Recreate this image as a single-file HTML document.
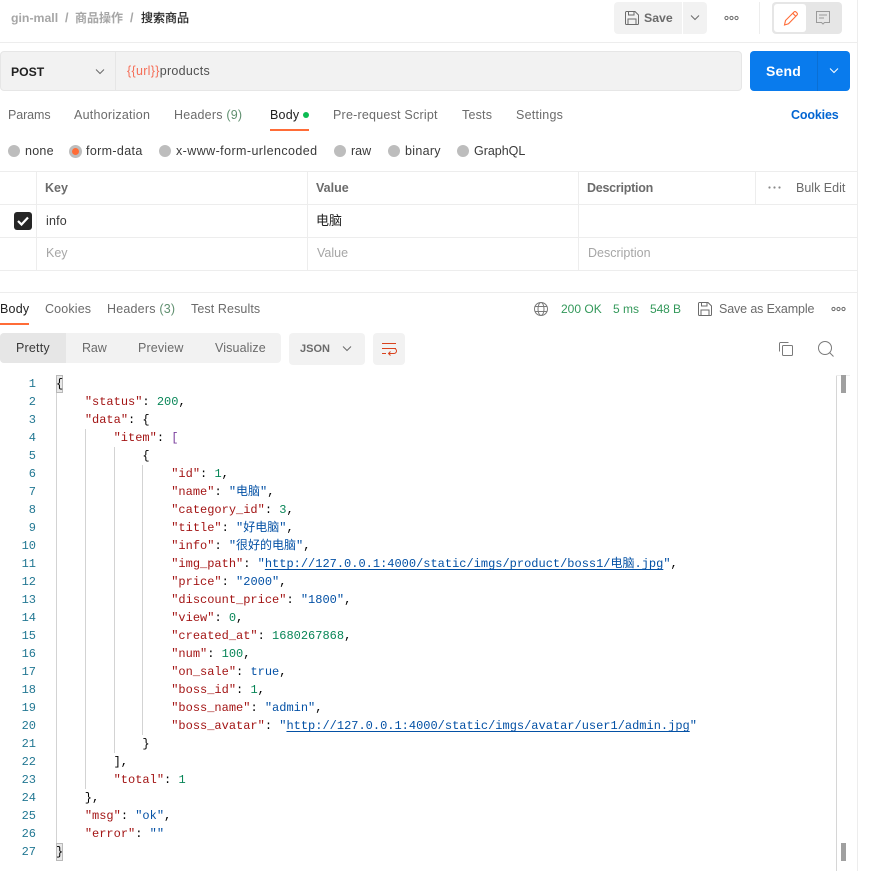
<!DOCTYPE html>
<html lang="zh"><head><meta charset="utf-8"><title>gin-mall</title>
<style>
html,body{margin:0;padding:0;background:#fff}
body{width:874px;height:871px;position:relative;overflow:hidden;font-family:"Liberation Sans","Noto Sans CJK SC",sans-serif;font-size:12.5px;color:#6b6b6b}
.b{position:absolute}
.t{position:absolute;white-space:pre;line-height:20px;height:20px}
.d{color:#212121}.m{color:#6b6b6b}.p{color:#a6a6a6}.g{color:#007f31;opacity:.8;font-size:12px}
.s{font-weight:bold}
.r{position:absolute;top:145px;width:12px;height:12px;border-radius:50%;background:#bdbdbd}
.l{color:#3a3a3a;top:141px}
svg{position:absolute;overflow:visible;fill:none}
.c{position:absolute;left:56px;height:18px;white-space:pre;font:12px/18px "Liberation Mono","Noto Sans CJK SC",monospace;color:#000}
.n{position:absolute;left:0;width:36px;text-align:right;font:12px/18px "Liberation Mono",monospace;color:#237893}
.k{color:#a31515}.v{color:#0451a5}.u{color:#0451a5;text-decoration:underline;text-underline-offset:2px}.i{color:#098658}.o{color:#0451a5}
</style></head><body>

<!-- structural lines -->
<div class="b" style="left:857px;top:0;width:1px;height:871px;background:#ededed"></div>
<div class="b" style="left:0;top:42px;width:857px;height:1px;background:#ededed"></div>

<!-- breadcrumb -->
<span class="t s p" style="left:11px;top:8px;font-size:12.3px">gin-mall</span>
<span class="t s p" style="left:65px;top:8px">/</span>
<span class="t s p" style="left:75px;top:8px;font-size:12px">商品操作</span>
<span class="t s p" style="left:130px;top:8px">/</span>
<span class="t d" style="left:141px;top:8px;font-size:12px;-webkit-text-stroke:.2px #212121">搜索商品</span>

<!-- save -->
<div class="b" style="left:614px;top:2px;width:68px;height:32px;background:#f2f2f2;border-radius:4px 0 0 4px"></div>
<div class="b" style="left:683px;top:2px;width:24px;height:32px;background:#f2f2f2;border-radius:0 4px 4px 0"></div>
<svg style="left:625px;top:11px" width="14" height="14" viewBox="0 0 14 14" stroke="#6b6b6b"><path d="M.5 1.500a1 1 0 0 1 1-1h8.500l3.500 3.500v8.500a1 1 0 0 1-1 1h-11a1 1 0 0 1-1-1z"/><path d="M3.500.5v3.500h5.500v-3.500M3 13.500v-5.500h8v5.500"/></svg>
<span class="t s m" style="left:644px;top:8px;font-size:12.3px">Save</span>
<svg style="left:690px;top:15px" width="10" height="6" viewBox="0 0 10 6" stroke="#6b6b6b"><path d="M1 .5l4 4 4-4"/></svg>
<svg style="left:724px;top:16px" width="15" height="5" viewBox="0 0 15 5" stroke="#6b6b6b"><circle cx="2.500" cy="2" r="1.600"/><circle cx="7.500" cy="2" r="1.600"/><circle cx="12.500" cy="2" r="1.600"/></svg>
<div class="b" style="left:759px;top:2px;width:1px;height:32px;background:#ededed"></div>
<div class="b" style="left:772px;top:2px;width:70px;height:32px;background:#e6e6e6;border-radius:4px"></div>
<div class="b" style="left:774px;top:4px;width:32px;height:28px;background:#fff;border-radius:3px"></div>
<svg style="left:783px;top:10px" width="16" height="16" viewBox="0 0 16 16" stroke="#ff6c37" stroke-width="1.100"><path d="M1.500 15l1-4.500L11 2a1.400 1.400 0 0 1 2 0l1 1a1.400 1.400 0 0 1 0 2L5.500 13.800z"/><path d="M9.800 3.300l2.900 2.900"/></svg>
<svg style="left:816px;top:11px" width="14" height="14" viewBox="0 0 14 14" stroke="#9a9a9a"><path d="M.5.500h13v11h-5l-1.500 1.500-1.500-1.500h-5z"/><path d="M3 4h8M3 7h5"/></svg>

<!-- url bar -->
<div class="b" style="left:0;top:51px;width:740px;height:38px;background:#f2f2f2;border:1px solid #e6e6e6;border-radius:4px"></div>
<div class="b" style="left:115px;top:52px;width:1px;height:38px;background:#e6e6e6"></div>
<span class="t s d" style="left:11px;top:62px;font-size:12.2px">POST</span>
<svg style="left:95px;top:69px" width="10" height="6" viewBox="0 0 10 6" stroke="#6b6b6b"><path d="M1 .5l4 4 4-4"/></svg>
<span class="t" style="left:127px;top:61px;font-size:12.5px;letter-spacing:.3px;color:#f56e58">{{url}}<span style="color:#505050">products</span></span>
<div class="b" style="left:750px;top:51px;width:100px;height:40px;background:#097bed;border-radius:4px"></div>
<div class="b" style="left:817px;top:51px;width:1px;height:40px;background:#0a6fd4"></div>
<span class="t s" style="left:766px;top:61px;font-size:14px;letter-spacing:.2px;color:#fff">Send</span>
<svg style="left:829px;top:68px" width="10" height="6" viewBox="0 0 10 6" stroke="#fff"><path d="M1 .5l4 4 4-4"/></svg>

<!-- request tabs -->
<span class="t m" style="left:8px;top:105px;letter-spacing:-.1px">Params</span>
<span class="t m" style="left:74px;top:105px;letter-spacing:.25px">Authorization</span>
<span class="t m" style="left:174px;top:105px;letter-spacing:.2px">Headers <span style="color:#5f8f6f">(9)</span></span>
<span class="t d" style="left:270px;top:105px;letter-spacing:.2px">Body</span>
<div class="b" style="left:303px;top:112px;width:6px;height:6px;border-radius:50%;background:#0cbb52"></div>
<div class="b" style="left:270px;top:129px;width:39px;height:2px;background:#ff6c37"></div>
<span class="t m" style="left:333px;top:105px;letter-spacing:.22px">Pre-request Script</span>
<span class="t m" style="left:462px;top:105px;letter-spacing:.2px">Tests</span>
<span class="t m" style="left:516px;top:105px;letter-spacing:.25px">Settings</span>
<span class="t s" style="left:791px;top:105px;letter-spacing:-.15px;color:#0265d2">Cookies</span>

<!-- radios -->
<div class="r" style="left:8px"></div>
<span class="t l" style="left:25px;letter-spacing:.25px">none</span>
<div class="r" style="left:69px;width:13px;height:13px"></div>
<div class="b" style="left:72px;top:148px;width:7px;height:7px;border-radius:50%;background:#ff6c37"></div>
<span class="t l" style="left:86px;letter-spacing:.35px">form-data</span>
<div class="r" style="left:159px"></div>
<span class="t l" style="left:176px;letter-spacing:.42px">x-www-form-urlencoded</span>
<div class="r" style="left:334px"></div>
<span class="t l" style="left:351px">raw</span>
<div class="r" style="left:388px"></div>
<span class="t l" style="left:405px;letter-spacing:.3px">binary</span>
<div class="r" style="left:457px"></div>
<span class="t l" style="left:474px;letter-spacing:-.02px">GraphQL</span>

<!-- params table -->
<div class="b" style="left:0;top:171px;width:857px;height:1px;background:#ededed"></div>
<div class="b" style="left:0;top:204px;width:857px;height:1px;background:#ededed"></div>
<div class="b" style="left:0;top:237px;width:857px;height:1px;background:#ededed"></div>
<div class="b" style="left:0;top:270px;width:857px;height:1px;background:#ededed"></div>
<div class="b" style="left:36px;top:171px;width:1px;height:99px;background:#ededed"></div>
<div class="b" style="left:307px;top:171px;width:1px;height:99px;background:#ededed"></div>
<div class="b" style="left:578px;top:171px;width:1px;height:99px;background:#ededed"></div>
<div class="b" style="left:755px;top:171px;width:1px;height:33px;background:#ededed"></div>
<span class="t s m" style="left:45px;top:178px">Key</span>
<span class="t s m" style="left:316px;top:178px">Value</span>
<span class="t s m" style="left:587px;top:178px;letter-spacing:-.25px">Description</span>
<svg style="left:768px;top:186px" width="13" height="3" viewBox="0 0 13 3"><circle cx="1.500" cy="1.500" r="1.100" fill="#8a8a8a"/><circle cx="6.500" cy="1.500" r="1.100" fill="#8a8a8a"/><circle cx="11.500" cy="1.500" r="1.100" fill="#8a8a8a"/></svg>
<span class="t m" style="left:796px;top:178px">Bulk Edit</span>
<div class="b" style="left:14px;top:212px;width:18px;height:18px;background:#262626;border-radius:3px"></div>
<svg style="left:17px;top:216px" width="12" height="10" viewBox="0 0 12 10" stroke="#fff" stroke-width="2.200"><path d="M1 5l3.500 3.500L11 1.500"/></svg>
<span class="t" style="left:46px;top:211px;letter-spacing:.2px;color:#3a3a3a">info</span>
<span class="t" style="left:316px;top:211px;font-size:13px;color:#212121">电脑</span>
<span class="t p" style="left:46px;top:243px">Key</span>
<span class="t p" style="left:317px;top:243px">Value</span>
<span class="t p" style="left:588px;top:243px">Description</span>

<!-- response tabs -->
<div class="b" style="left:0;top:292px;width:857px;height:1px;background:#ededed"></div>
<span class="t d" style="left:0;top:299px;letter-spacing:.2px">Body</span>
<div class="b" style="left:0;top:323px;width:29px;height:2px;background:#ff6c37"></div>
<span class="t m" style="left:45px;top:299px;letter-spacing:.15px">Cookies</span>
<span class="t m" style="left:107px;top:299px;letter-spacing:.2px">Headers <span style="color:#5f8f6f">(3)</span></span>
<span class="t m" style="left:191px;top:299px;letter-spacing:.1px">Test Results</span>
<svg style="left:534px;top:302px" width="14" height="14" viewBox="0 0 14 14" stroke="#7a7a7a"><circle cx="7" cy="7" r="6.500"/><ellipse cx="7" cy="7" rx="3" ry="6.500"/><path d="M1 4.500h12M1 9.500h12"/></svg>
<span class="t g" style="left:561px;top:299px">200 OK</span>
<span class="t g" style="left:613px;top:299px">5 ms</span>
<span class="t g" style="left:650px;top:299px;letter-spacing:-.1px">548 B</span>
<svg style="left:698px;top:302px" width="14" height="14" viewBox="0 0 14 14" stroke="#6b6b6b"><path d="M.5 1.500a1 1 0 0 1 1-1h8.500l3.500 3.500v8.500a1 1 0 0 1-1 1h-11a1 1 0 0 1-1-1z"/><path d="M3.500.5v3.500h5.500v-3.500M3 13.500v-5.500h8v5.500"/></svg>
<span class="t m" style="left:719px;top:299px;letter-spacing:-.13px">Save as Example</span>
<svg style="left:831px;top:307px" width="15" height="5" viewBox="0 0 15 5" stroke="#6b6b6b"><circle cx="2.500" cy="2" r="1.600"/><circle cx="7.500" cy="2" r="1.600"/><circle cx="12.500" cy="2" r="1.600"/></svg>

<!-- response toolbar -->
<div class="b" style="left:0;top:333px;width:281px;height:30px;background:#f2f2f2;border-radius:4px"></div>
<div class="b" style="left:0;top:333px;width:66px;height:30px;background:#e6e6e6;border-radius:4px 0 0 4px"></div>
<span class="t" style="left:16px;top:338px;letter-spacing:.2px;color:#3a3a3a">Pretty</span>
<span class="t m" style="left:82px;top:338px;letter-spacing:-.1px">Raw</span>
<span class="t m" style="left:138px;top:338px;letter-spacing:.15px">Preview</span>
<span class="t m" style="left:215px;top:338px;letter-spacing:.12px">Visualize</span>
<div class="b" style="left:289px;top:333px;width:76px;height:32px;background:#f2f2f2;border-radius:4px"></div>
<span class="t s m" style="left:300px;top:339px;font-size:11px">JSON</span>
<svg style="left:342px;top:346px" width="10" height="6" viewBox="0 0 10 6" stroke="#6b6b6b"><path d="M1 .5l4 4 4-4"/></svg>
<div class="b" style="left:373px;top:333px;width:32px;height:32px;background:#f2f2f2;border-radius:4px"></div>
<svg style="left:382px;top:343px" width="14" height="14" viewBox="0 0 14 14" stroke="#d9431e"><path d="M0 .5h14M0 5.500h14M0 10.500h4"/><path d="M6.500 10.500h5.500a1.500 1.500 0 0 0 0-5M8.500 8.500l-2 2 2 2"/></svg>
<svg style="left:779px;top:342px" width="15" height="15" viewBox="0 0 15 15" stroke="#7a7a7a"><rect x="3.500" y="3.500" width="10" height="10" rx="1"/><path d="M.5 9.500v-8a1 1 0 0 1 1-1h8"/></svg>
<svg style="left:818px;top:341px" width="16" height="16" viewBox="0 0 16 16" stroke="#7a7a7a"><circle cx="7" cy="7" r="6.500"/><path d="M11.500 11.500l4 4"/></svg>

<!-- code guides and scrollbar -->
<div class="b" style="left:56px;top:375px;width:1px;height:486px;background:#d3d3d3"></div>
<div class="b" style="left:85px;top:429px;width:1px;height:360px;background:#d3d3d3"></div>
<div class="b" style="left:114px;top:447px;width:1px;height:306px;background:#d3d3d3"></div>
<div class="b" style="left:142px;top:465px;width:1px;height:270px;background:#d3d3d3"></div>
<div class="b" style="left:56px;top:375px;width:5px;height:16px;background:#e8e8e8;border:1px solid #b9b9b9"></div>
<div class="b" style="left:56px;top:843px;width:5px;height:16px;background:#e8e8e8;border:1px solid #b9b9b9"></div>
<div class="b" style="left:836px;top:375px;width:1px;height:496px;background:#d6d6d6"></div>
<div class="b" style="left:836px;top:375px;width:14px;height:1px;background:#ededed"></div>
<div class="b" style="left:841px;top:375px;width:5px;height:18px;background:#a0a0a0"></div>
<div class="b" style="left:841px;top:843px;width:5px;height:18px;background:#a0a0a0"></div>

<!-- line numbers -->
<div class="n" style="top:375px">1</div><div class="n" style="top:393px">2</div><div class="n" style="top:411px">3</div><div class="n" style="top:429px">4</div><div class="n" style="top:447px">5</div><div class="n" style="top:465px">6</div><div class="n" style="top:483px">7</div><div class="n" style="top:501px">8</div><div class="n" style="top:519px">9</div><div class="n" style="top:537px">10</div><div class="n" style="top:555px">11</div><div class="n" style="top:573px">12</div><div class="n" style="top:591px">13</div><div class="n" style="top:609px">14</div><div class="n" style="top:627px">15</div><div class="n" style="top:645px">16</div><div class="n" style="top:663px">17</div><div class="n" style="top:681px">18</div><div class="n" style="top:699px">19</div><div class="n" style="top:717px">20</div><div class="n" style="top:735px">21</div><div class="n" style="top:753px">22</div><div class="n" style="top:771px">23</div><div class="n" style="top:789px">24</div><div class="n" style="top:807px">25</div><div class="n" style="top:825px">26</div><div class="n" style="top:843px">27</div>

<!-- code -->
<div class="c" style="top:375px">{</div>
<div class="c" style="top:393px">    <span class="k">"status"</span>: <span class="i">200</span>,</div>
<div class="c" style="top:411px">    <span class="k">"data"</span>: {</div>
<div class="c" style="top:429px">        <span class="k">"item"</span>: <span style="color:#7a3e9d">[</span></div>
<div class="c" style="top:447px">            {</div>
<div class="c" style="top:465px">                <span class="k">"id"</span>: <span class="i">1</span>,</div>
<div class="c" style="top:483px">                <span class="k">"name"</span>: <span class="v">"电脑"</span>,</div>
<div class="c" style="top:501px">                <span class="k">"category_id"</span>: <span class="i">3</span>,</div>
<div class="c" style="top:519px">                <span class="k">"title"</span>: <span class="v">"好电脑"</span>,</div>
<div class="c" style="top:537px">                <span class="k">"info"</span>: <span class="v">"很好的电脑"</span>,</div>
<div class="c" style="top:555px">                <span class="k">"img_path"</span>: <span class="v">"<span class="u">http://127.0.0.1:4000/static/imgs/product/boss1/电脑.jpg</span>"</span>,</div>
<div class="c" style="top:573px">                <span class="k">"price"</span>: <span class="v">"2000"</span>,</div>
<div class="c" style="top:591px">                <span class="k">"discount_price"</span>: <span class="v">"1800"</span>,</div>
<div class="c" style="top:609px">                <span class="k">"view"</span>: <span class="i">0</span>,</div>
<div class="c" style="top:627px">                <span class="k">"created_at"</span>: <span class="i">1680267868</span>,</div>
<div class="c" style="top:645px">                <span class="k">"num"</span>: <span class="i">100</span>,</div>
<div class="c" style="top:663px">                <span class="k">"on_sale"</span>: <span class="o">true</span>,</div>
<div class="c" style="top:681px">                <span class="k">"boss_id"</span>: <span class="i">1</span>,</div>
<div class="c" style="top:699px">                <span class="k">"boss_name"</span>: <span class="v">"admin"</span>,</div>
<div class="c" style="top:717px">                <span class="k">"boss_avatar"</span>: <span class="v">"<span class="u">http://127.0.0.1:4000/static/imgs/avatar/user1/admin.jpg</span>"</span></div>
<div class="c" style="top:735px">            }</div>
<div class="c" style="top:753px">        ],</div>
<div class="c" style="top:771px">        <span class="k">"total"</span>: <span class="i">1</span></div>
<div class="c" style="top:789px">    },</div>
<div class="c" style="top:807px">    <span class="k">"msg"</span>: <span class="v">"ok"</span>,</div>
<div class="c" style="top:825px">    <span class="k">"error"</span>: <span class="v">""</span></div>
<div class="c" style="top:843px">}</div>

</body></html>
